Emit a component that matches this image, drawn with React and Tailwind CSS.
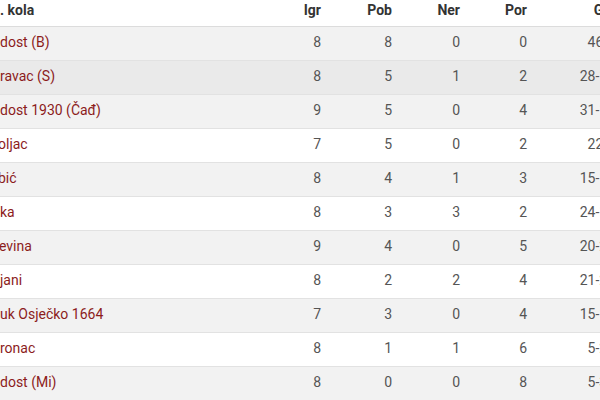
const rows = [
  { name: "dost (B)", shift: "", igr: 8, pob: 8, ner: 0, por: 0, gol: "46-4", bg: "bg-[#f2f2f2]" },
  { name: "ravac (S)", shift: "", igr: 8, pob: 5, ner: 1, por: 2, gol: "28-10", bg: "bg-[#eaeaea]" },
  { name: "dost 1930 (Čađ)", shift: "", igr: 9, pob: 5, ner: 0, por: 4, gol: "31-15", bg: "bg-[#f2f2f2]" },
  { name: "oljac", shift: "-ml-[2px]", igr: 7, pob: 5, ner: 0, por: 2, gol: "22-9", bg: "bg-white" },
  { name: "bić", shift: "-ml-[2px]", igr: 8, pob: 4, ner: 1, por: 3, gol: "15-14", bg: "bg-[#f2f2f2]" },
  { name: "ka", shift: "", igr: 8, pob: 3, ner: 3, por: 2, gol: "24-17", bg: "bg-white" },
  { name: "evina", shift: "-ml-[1px]", igr: 9, pob: 4, ner: 0, por: 5, gol: "20-22", bg: "bg-[#f2f2f2]" },
  { name: "jani", shift: "", igr: 8, pob: 2, ner: 2, por: 4, gol: "21-22", bg: "bg-white" },
  { name: "uk Osječko 1664", shift: "", igr: 7, pob: 3, ner: 0, por: 4, gol: "15-19", bg: "bg-[#f2f2f2]" },
  { name: "ronac", shift: "", igr: 8, pob: 1, ner: 1, por: 6, gol: "5-26", bg: "bg-white" },
  { name: "dost (Mi)", shift: "", igr: 8, pob: 0, ner: 0, por: 8, gol: "5-38", bg: "bg-[#f2f2f2]" },
];

const cols = "grid grid-cols-[251px_70px_71px_68px_67px_88px]";

export default function App() {
  return (
    <div className="w-[600px] h-[400px] overflow-hidden bg-white font-['Roboto',sans-serif] text-sm leading-5">
      <div className="w-[615px]">
        <div className={`${cols} h-[27px] border-b border-[#dcdcdc] font-bold text-[#333]`}>
          <div>. kola</div>
          <div className="text-right">Igr</div>
          <div className="text-right">Pob</div>
          <div className="text-right">Ner</div>
          <div className="text-right">Por</div>
          <div className="text-right">Gol</div>
        </div>

        {rows.map((r) => (
          <div
            key={r.name}
            className={`${cols} h-[34px] pt-[5px] border-b border-[#e2e2e2] ${r.bg} text-[#555]`}
          >
            <div className="overflow-hidden whitespace-nowrap">
              <span className={`block ${r.shift} text-[#8c1c1c]`}>{r.name}</span>
            </div>
            <div className="text-right">{r.igr}</div>
            <div className="text-right">{r.pob}</div>
            <div className="text-right">{r.ner}</div>
            <div className="text-right">{r.por}</div>
            <div className="text-right">{r.gol}</div>
          </div>
        ))}
      </div>
    </div>
  );
}
